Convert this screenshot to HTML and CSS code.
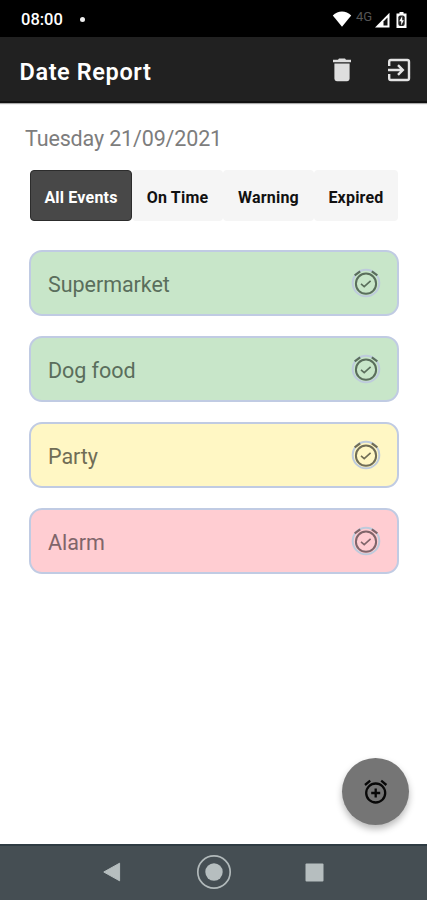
FILE: index.html
```html
<!DOCTYPE html>
<html lang="en">
<head>
<meta charset="utf-8">
<title>Date Report</title>
<link rel="stylesheet" href="styles.css">
</head>
<body>
<svg class="defs" width="0" height="0">
  <symbol id="alarm-check" viewBox="0 0 30 30">
    <circle cx="15" cy="15" r="13.3" fill="none" stroke="#becbdc" stroke-width="2"/>
    <circle cx="15" cy="15.700" r="10.1" fill="none" stroke="currentColor" stroke-width="2"/>
    <path d="M3.700 7.400l5.500-4M20.800 3.400L26.300 7.400" fill="none" stroke="currentColor" stroke-width="2.200"/>
    <path d="M10 15.900l3.200 2.800 6.400-5.800" fill="none" stroke="currentColor" stroke-width="1.6"/>
  </symbol>
</svg>
<div class="phone">
  <div class="status">
    <span class="clock">08:00</span><span class="dot"></span>
    <svg class="wifi" width="20" height="17" viewBox="0 0 20 17"><path d="M.8 4.4C6-.7 14-.7 19.200 4.400L10 15.800z" fill="#fff"/></svg>
    <span class="net">4G</span>
    <svg class="signal" width="15" height="16" viewBox="0 0 15 16"><path d="M14.500 .8V15.400H0z" fill="#fff"/><path d="M8.500 9.500l4-4V13.500h-4z" fill="#111"/></svg>
    <svg class="battery" width="11" height="16" viewBox="0 0 11 16"><path d="M3.500 0h4v1.500H10.500V16H.5V1.500h3z" fill="#fff"/><rect x="2.300" y="3.500" width="6.400" height="10.500" rx="2" fill="#222"/><path d="M6.200 4L3.300 9.300h1.900V13.500L7.800 8.200H6.200z" fill="#fff"/></svg>
  </div>
  <header class="bar">
    <h1>Date Report</h1>
    <svg class="trash" width="20" height="24" viewBox="0 0 20 24"><path d="M1 1.700h5L7 .5h6l1 1.200h5v2.600H1zM2.400 5.500h15.200v15.300q0 2.400-2.400 2.400H4.800q-2.400 0-2.400-2.400z" fill="#dedede"/></svg>
    <svg class="exit" width="24" height="24" viewBox="0 0 24 24"><path d="M2.200 8V3.700q0-1.700 1.700-1.700h16.400q1.700 0 1.700 1.700v16.600q0 1.700-1.700 1.700H3.900q-1.700 0-1.700-1.700V16M1 12h14.500M11 7.200l4.800 4.800-4.800 4.800" fill="none" stroke="#e4e4e4" stroke-width="2.400"/></svg>
  </header>
  <main>
    <p class="date">Tuesday 21/09/2021</p>
    <nav class="tabs">
      <span class="tab active">All Events</span><span class="tab">On Time</span><span class="tab">Warning</span><span class="tab">Expired</span>
    </nav>
    <section class="cards">
      <div class="card green"><span>Supermarket</span><svg width="30" height="30"><use href="#alarm-check"/></svg></div>
      <div class="card green"><span>Dog food</span><svg width="30" height="30"><use href="#alarm-check"/></svg></div>
      <div class="card yellow"><span>Party</span><svg width="30" height="30"><use href="#alarm-check"/></svg></div>
      <div class="card red"><span>Alarm</span><svg width="30" height="30"><use href="#alarm-check"/></svg></div>
    </section>
  </main>
  <div class="fab"><svg width="26" height="26" viewBox="0 0 26 26"><g fill="none" stroke="#080808" stroke-width="2.300"><circle cx="12.700" cy="14" r="9.500"/><path d="M2 6l5.200-4.300M18.200 1.700l5.200 4.300"/><path d="M12.700 9.500v9M8.200 14h9"/></g></svg></div>
  <footer class="navbar">
    <svg width="18" height="20" viewBox="0 0 18 20"><path d="M16.600 1.200v17.600L.8 10z" fill="#b6bebf" stroke="#b6bebf" stroke-linejoin="round"/></svg>
    <svg width="36" height="36" viewBox="0 0 36 36"><circle cx="18" cy="18" r="16.200" fill="none" stroke="#b1b9ba" stroke-width="1.700"/><circle cx="18" cy="18" r="8.700" fill="#b6bebf"/></svg>
    <svg width="19" height="19" viewBox="0 0 19 19"><rect x=".5" y=".5" width="18" height="18" rx="1" fill="#b6bebf"/></svg>
  </footer>
</div>
</body>
</html>
```
FILE: styles.css
```css
* { box-sizing: border-box; }
body { margin: 0; background: #fff; font-family: Roboto, "Liberation Sans", sans-serif; }
svg { display: block; flex: none; }
.defs { position: absolute; }
.phone { position: relative; width: 427px; height: 900px; display: flex; flex-direction: column; overflow: hidden; }
.status { height: 37px; background: #000; color: #fff; display: flex; align-items: center; padding: 2px 20px 0 21px; }
.clock { width: 59px; font-size: 16.5px; font-weight: 500; white-space: nowrap; }
.dot { width: 5px; height: 5px; border-radius: 50%; background: #eee; margin-right: auto; }
.net { width: 19px; margin-left: 4px; color: #555; font-size: 13px; line-height: 15px; margin-bottom: 6px; }
.battery { margin-left: 6px; }
.bar { height: 66px; background: #212121; border-bottom: 2px solid #111; display: flex; align-items: center; padding: 2px 16px 0 19px; color: #fff; box-shadow: 0 1px 1px #aaa; }
.bar h1 { margin: 3px auto 0 .5px; font-size: 23.5px; font-weight: 600; line-height: 30px; letter-spacing: .6px; }
.exit { margin-left: 35px; }
main { flex: 1; padding: 21px 28px 0 29px; }
.date { margin: 0 0 0 -4px; height: 30px; line-height: 30px; font-size: 21.5px; letter-spacing: -.15px; color: #7d7d7d; white-space: nowrap; }
.tabs { display: grid; grid-template-columns: 102px 91px 91px 84px; height: 51px; margin: 16px 0 0 1px; }
.tab { display: flex; align-items: center; justify-content: center; background: #f5f5f5; border-radius: 4px; color: #111; font-size: 16px; font-weight: 700; letter-spacing: .2px; padding: 3px 0 0 0; white-space: nowrap; }
.tab.active { background: #484848; color: #fff; border: 1px solid #2c2c2c; }
.cards { display: grid; gap: 19.500px; margin-top: 29px; }
.card { height: 66.400px; border: 2px solid #c0cbe3; border-radius: 13px; display: flex; align-items: center; justify-content: space-between; padding: 3px 16px 0 17px; font-size: 21.5px; letter-spacing: -.05px; }
.card svg { margin-top: -3px; }
.green { background: #c8e6c9; color: #5a6e5c; }
.yellow { background: #fff7c4; color: #706d56; }
.red { background: #ffcdd2; color: #80656a; }
.fab { position: absolute; left: 342px; top: 758px; width: 67px; height: 67px; border-radius: 50%; background: #757575; display: flex; align-items: center; justify-content: center; box-shadow: 0 4px 7px rgba(0,0,0,.28); }
.navbar { height: 56px; background: #454e53; border-top: 2px solid #2f3c43; display: grid; grid-template-columns: 102px 102px 100px; justify-content: center; align-items: center; justify-items: center; padding: 0 2px 2px 0; }
```
